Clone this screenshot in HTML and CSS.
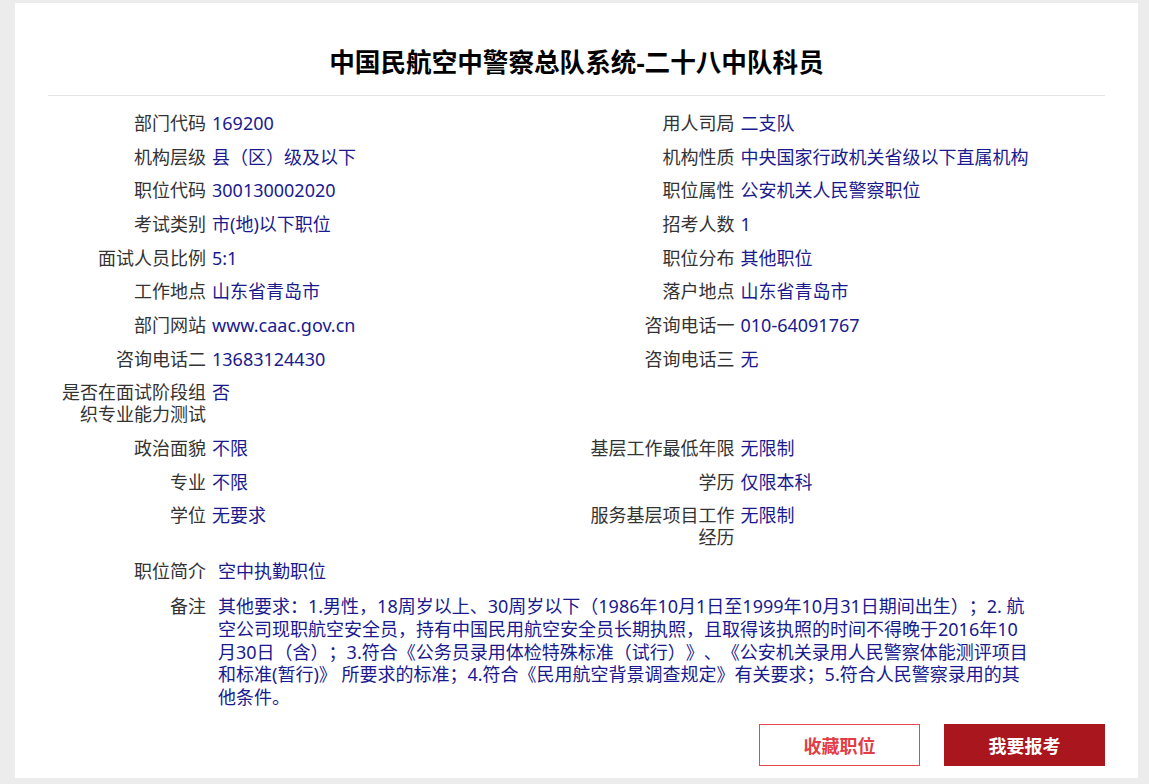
FILE: index.html
```html
<!DOCTYPE html>
<html lang="zh-CN">
<head>
    <meta charset="UTF-8">
    <title>职位详情</title>
    <link rel="stylesheet" href="styles.css">
</head>
<body>
    <div class="card">
        <h1 class="title">中国民航空中警察总队系统-二十八中队科员</h1>

        <div class="info-grid">
            <div class="field"><span class="label">部门代码</span><span class="value">169200</span></div>
            <div class="field"><span class="label">用人司局</span><span class="value">二支队</span></div>

            <div class="field"><span class="label">机构层级</span><span class="value">县（区）级及以下</span></div>
            <div class="field"><span class="label">机构性质</span><span class="value">中央国家行政机关省级以下直属机构</span></div>

            <div class="field"><span class="label">职位代码</span><span class="value">300130002020</span></div>
            <div class="field"><span class="label">职位属性</span><span class="value">公安机关人民警察职位</span></div>

            <div class="field"><span class="label">考试类别</span><span class="value">市(地)以下职位</span></div>
            <div class="field"><span class="label">招考人数</span><span class="value">1</span></div>

            <div class="field"><span class="label">面试人员比例</span><span class="value">5:1</span></div>
            <div class="field"><span class="label">职位分布</span><span class="value">其他职位</span></div>

            <div class="field"><span class="label">工作地点</span><span class="value">山东省青岛市</span></div>
            <div class="field"><span class="label">落户地点</span><span class="value">山东省青岛市</span></div>

            <div class="field"><span class="label">部门网站</span><span class="value">www.caac.gov.cn</span></div>
            <div class="field"><span class="label">咨询电话一</span><span class="value">010-64091767</span></div>

            <div class="field"><span class="label">咨询电话二</span><span class="value">13683124430</span></div>
            <div class="field"><span class="label">咨询电话三</span><span class="value">无</span></div>

            <div class="field"><span class="label">是否在面试阶段组织专业能力测试</span><span class="value">否</span></div>
            <div class="field"></div>

            <div class="field"><span class="label">政治面貌</span><span class="value">不限</span></div>
            <div class="field"><span class="label">基层工作最低年限</span><span class="value">无限制</span></div>

            <div class="field"><span class="label">专业</span><span class="value">不限</span></div>
            <div class="field"><span class="label">学历</span><span class="value">仅限本科</span></div>

            <div class="field"><span class="label">学位</span><span class="value">无要求</span></div>
            <div class="field"><span class="label">服务基层项目工作经历</span><span class="value">无限制</span></div>
        </div>

        <div class="field wide"><span class="label">职位简介</span><span class="value">空中执勤职位</span></div>
        <div class="field wide remark"><span class="label">备注</span><span class="value">其他要求：1.男性，18周岁以上、30周岁以下（1986年10月1日至1999年10月31日期间出生）；2. 航空公司现职航空安全员，持有中国民用航空安全员长期执照，且取得该执照的时间不得晚于2016年10月30日（含）；3.符合《公务员录用体检特殊标准（试行）》、《公安机关录用人民警察体能测评项目和标准(暂行)》 所要求的标准；4.符合《民用航空背景调查规定》有关要求；5.符合人民警察录用的其他条件。</span></div>

        <div class="actions">
            <button class="btn btn-outline">收藏职位</button>
            <button class="btn btn-solid">我要报考</button>
        </div>
    </div>
</body>
</html>
```

FILE: styles.css
```css
* { margin: 0; padding: 0; box-sizing: border-box; }
html, body { height: 100%; }
body {
    background: #ececec;
    font-family: "Noto Sans", "Noto Sans CJK SC", sans-serif;
    color: #333;
    font-size: 18px;
    overflow: hidden;
    text-spacing-trim: space-all;
}
.card {
    background: #fff;
    margin: 3px 11px 0 15px;
    height: 775px;
    padding: 0 33px;
}
.title {
    font-size: 25.6px;
    font-weight: bold;
    color: #000;
    text-align: center;
    line-height: 32px;
    padding: 44px 0 16px;
    border-bottom: 1px solid #e4e4e4;
}
.info-grid {
    display: grid;
    grid-template-columns: 1fr 1fr;
    padding-top: 10px;
}
.field {
    display: flex;
    align-items: flex-start;
    line-height: 22px;
    padding: 5.85px 0;
}
.label {
    flex: 0 0 158px;
    text-align: right;
    color: #333;
}
.value {
    margin-left: 6px;
    color: #1a1a8f;
}
.field.wide .value {
    margin-left: 12px;
    width: 816px;
}
.remark {
    line-height: 22.8px;
    padding-top: 7px;
}
.actions {
    display: flex;
    justify-content: flex-end;
    gap: 24px;
    margin-top: 9px;
}
.btn {
    width: 161px;
    height: 42px;
    font-family: "Noto Sans CJK SC", sans-serif;
    font-size: 18px;
    font-weight: bold;
    cursor: pointer;
}
.btn-outline {
    background: #fff;
    color: #e23c44;
    border: 1px solid #e8474f;
}
.btn-solid {
    background: #a9161e;
    color: #fff;
    border: none;
}
```
